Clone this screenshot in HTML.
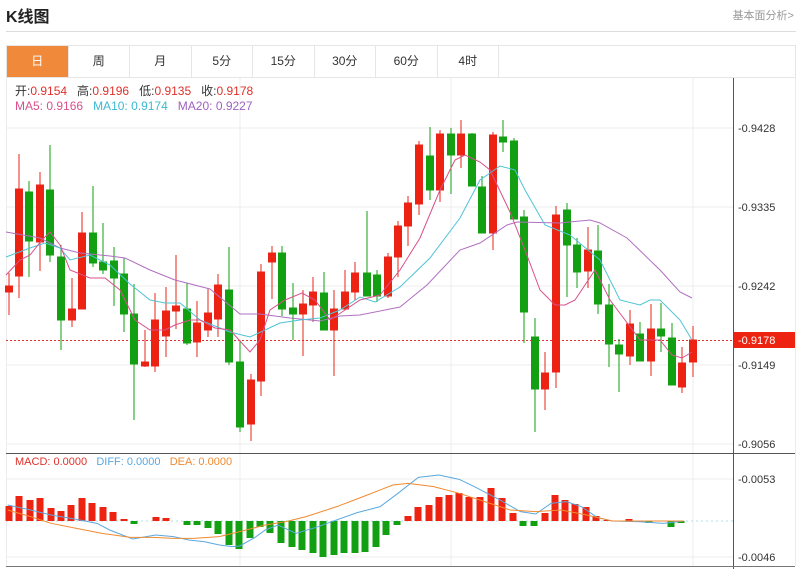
<!DOCTYPE html>
<html><head><meta charset="utf-8"><style>
*{margin:0;padding:0;box-sizing:border-box}
body{width:800px;height:569px;background:#fff;font-family:"Liberation Sans","Noto Sans CJK SC",sans-serif;position:relative;overflow:hidden}
.t{position:absolute;left:6px;top:3px;font-size:16px;font-weight:bold;color:#222}
.r{position:absolute;right:6px;top:7px;font-size:11px;color:#999}
.hl{position:absolute;left:6px;top:31px;width:790px;height:1px;background:#ddd}
.tabs{position:absolute;left:6px;top:45px;width:790px;height:33px;border:1px solid #e6e6e6;display:flex}
.tabs div{width:61.5px;border-right:1px solid #e6e6e6;text-align:center;line-height:31px;font-size:12px;color:#333}
.tabs div.a{background:#f0893a;color:#fff}
.i1{position:absolute;left:15px;top:82px;font-size:12px;color:#333}
.i1 b{font-weight:normal;color:#e0302a;margin-right:10px}
.i2{position:absolute;left:15px;top:99px;font-size:12px}
.m{position:absolute;left:15px;top:456px;font-size:11px}
</style></head><body>
<div class="t">K线图</div><div class="r">基本面分析&gt;</div><div class="hl"></div>
<div class="tabs"><div class="a">日</div><div>周</div><div>月</div><div>5分</div><div>15分</div><div>30分</div><div>60分</div><div>4时</div></div>
<svg width="800" height="569" style="position:absolute;left:0;top:0">
<g stroke="#ececec" stroke-width="1">
<line x1="6" y1="128" x2="733" y2="128"/><line x1="6" y1="207" x2="733" y2="207"/><line x1="6" y1="286" x2="733" y2="286"/><line x1="6" y1="365" x2="733" y2="365"/><line x1="6" y1="444" x2="733" y2="444"/>
<line x1="240" y1="78" x2="240" y2="566"/><line x1="451" y1="78" x2="451" y2="566"/><line x1="693" y1="78" x2="693" y2="566"/>
<line x1="6.5" y1="78" x2="6.5" y2="566"/><line x1="795.5" y1="78" x2="795.5" y2="566"/>
<line x1="6" y1="479" x2="733" y2="479"/><line x1="6" y1="557" x2="733" y2="557"/>
</g>
<line x1="733.5" y1="78" x2="733.5" y2="569" stroke="#555"/>
<line x1="6" y1="453.5" x2="795" y2="453.5" stroke="#555"/>
<line x1="6" y1="566.5" x2="795" y2="566.5" stroke="#777"/>
<g font-size="11" fill="#333"><text x="738" y="132">-0.9428</text><text x="738" y="211">-0.9335</text><text x="738" y="290">-0.9242</text><text x="738" y="369">-0.9149</text><text x="738" y="448">-0.9056</text><text x="738" y="483">-0.0053</text><text x="738" y="561">-0.0046</text></g>
<line x1="6" y1="340.5" x2="733" y2="340.5" stroke="#e03030" stroke-dasharray="2,2"/>
<rect x="734" y="332" width="61" height="16" fill="#ee2211"/><text x="738" y="344" font-size="11" fill="#fff">-0.9178</text>
<g stroke-width="1">
<g stroke="#e8241a" fill="#ee2211">
<line x1="9" y1="273" x2="9" y2="315"/><rect x="5.5" y="286" width="7" height="6"/>
<line x1="19" y1="154" x2="19" y2="298"/><rect x="15.5" y="189" width="7" height="87"/>
<line x1="40" y1="172" x2="40" y2="271"/><rect x="36.5" y="185" width="7" height="57"/>
<line x1="72" y1="278" x2="72" y2="327"/><rect x="68.5" y="309" width="7" height="11"/>
<line x1="82" y1="212" x2="82" y2="309"/><rect x="78.5" y="233" width="7" height="76"/>
<line x1="145" y1="330" x2="145" y2="367"/><rect x="141.5" y="362" width="7" height="4"/>
<line x1="155" y1="293" x2="155" y2="372"/><rect x="151.5" y="320" width="7" height="46"/>
<line x1="166" y1="287" x2="166" y2="357"/><rect x="162.5" y="311" width="7" height="25"/>
<line x1="176" y1="255" x2="176" y2="329"/><rect x="172.5" y="306" width="7" height="5"/>
<line x1="197" y1="301" x2="197" y2="357"/><rect x="193.5" y="323" width="7" height="19"/>
<line x1="208" y1="289" x2="208" y2="337"/><rect x="204.5" y="313" width="7" height="17"/>
<line x1="218" y1="274" x2="218" y2="337"/><rect x="214.5" y="285" width="7" height="34"/>
<line x1="251" y1="374" x2="251" y2="441"/><rect x="247.5" y="380" width="7" height="44"/>
<line x1="261" y1="264" x2="261" y2="396"/><rect x="257.5" y="272" width="7" height="109"/>
<line x1="272" y1="246" x2="272" y2="299"/><rect x="268.5" y="253" width="7" height="9"/>
<line x1="303" y1="290" x2="303" y2="356"/><rect x="299.5" y="304" width="7" height="10"/>
<line x1="313" y1="277" x2="313" y2="322"/><rect x="309.5" y="292" width="7" height="13"/>
<line x1="334" y1="290" x2="334" y2="376"/><rect x="330.5" y="309" width="7" height="21"/>
<line x1="345" y1="270" x2="345" y2="310"/><rect x="341.5" y="292" width="7" height="17"/>
<line x1="355" y1="262" x2="355" y2="300"/><rect x="351.5" y="273" width="7" height="19"/>
<line x1="388" y1="253" x2="388" y2="298"/><rect x="384.5" y="257" width="7" height="39"/>
<line x1="398" y1="221" x2="398" y2="277"/><rect x="394.5" y="226" width="7" height="31"/>
<line x1="408" y1="196" x2="408" y2="246"/><rect x="404.5" y="203" width="7" height="23"/>
<line x1="419" y1="141" x2="419" y2="215"/><rect x="415.5" y="145" width="7" height="59"/>
<line x1="440" y1="130" x2="440" y2="202"/><rect x="436.5" y="134" width="7" height="56"/>
<line x1="461" y1="120" x2="461" y2="168"/><rect x="457.5" y="134" width="7" height="21"/>
<line x1="493" y1="132" x2="493" y2="250"/><rect x="489.5" y="135" width="7" height="98"/>
<line x1="545" y1="352" x2="545" y2="410"/><rect x="541.5" y="373" width="7" height="16"/>
<line x1="556" y1="206" x2="556" y2="388"/><rect x="552.5" y="215" width="7" height="157"/>
<line x1="588" y1="227" x2="588" y2="288"/><rect x="584.5" y="250" width="7" height="21"/>
<line x1="630" y1="310" x2="630" y2="365"/><rect x="626.5" y="324" width="7" height="32"/>
<line x1="651" y1="304" x2="651" y2="376"/><rect x="647.5" y="329" width="7" height="32"/>
<line x1="682" y1="347" x2="682" y2="393"/><rect x="678.5" y="363" width="7" height="24"/>
<line x1="693" y1="326" x2="693" y2="377"/><rect x="689.5" y="340" width="7" height="22"/>
</g>
<g stroke="#12a012" fill="#12a012">
<line x1="29" y1="181" x2="29" y2="277"/><rect x="25.5" y="192" width="7" height="49"/>
<line x1="50" y1="145" x2="50" y2="262"/><rect x="46.5" y="190" width="7" height="65"/>
<line x1="61" y1="245" x2="61" y2="350"/><rect x="57.5" y="257" width="7" height="63"/>
<line x1="93" y1="186" x2="93" y2="267"/><rect x="89.5" y="233" width="7" height="30"/>
<line x1="103" y1="223" x2="103" y2="274"/><rect x="99.5" y="262" width="7" height="8"/>
<line x1="114" y1="247" x2="114" y2="306"/><rect x="110.5" y="261" width="7" height="17"/>
<line x1="124" y1="258" x2="124" y2="332"/><rect x="120.5" y="274" width="7" height="40"/>
<line x1="134" y1="284" x2="134" y2="420"/><rect x="130.5" y="314" width="7" height="50"/>
<line x1="187" y1="283" x2="187" y2="345"/><rect x="183.5" y="309" width="7" height="34"/>
<line x1="229" y1="247" x2="229" y2="365"/><rect x="225.5" y="290" width="7" height="72"/>
<line x1="240" y1="340" x2="240" y2="432"/><rect x="236.5" y="362" width="7" height="65"/>
<line x1="282" y1="246" x2="282" y2="316"/><rect x="278.5" y="253" width="7" height="56"/>
<line x1="293" y1="283" x2="293" y2="340"/><rect x="289.5" y="308" width="7" height="6"/>
<line x1="324" y1="272" x2="324" y2="330"/><rect x="320.5" y="293" width="7" height="37"/>
<line x1="367" y1="211" x2="367" y2="296"/><rect x="363.5" y="273" width="7" height="23"/>
<line x1="377" y1="270" x2="377" y2="302"/><rect x="373.5" y="275" width="7" height="21"/>
<line x1="430" y1="127" x2="430" y2="200"/><rect x="426.5" y="156" width="7" height="34"/>
<line x1="451" y1="128" x2="451" y2="194"/><rect x="447.5" y="134" width="7" height="21"/>
<line x1="472" y1="133" x2="472" y2="186"/><rect x="468.5" y="134" width="7" height="52"/>
<line x1="482" y1="176" x2="482" y2="233"/><rect x="478.5" y="187" width="7" height="46"/>
<line x1="503" y1="120" x2="503" y2="152"/><rect x="499.5" y="137" width="7" height="5"/>
<line x1="514" y1="138" x2="514" y2="219"/><rect x="510.5" y="141" width="7" height="78"/>
<line x1="524" y1="210" x2="524" y2="343"/><rect x="520.5" y="217" width="7" height="95"/>
<line x1="535" y1="318" x2="535" y2="432"/><rect x="531.5" y="337" width="7" height="52"/>
<line x1="567" y1="203" x2="567" y2="297"/><rect x="563.5" y="210" width="7" height="35"/>
<line x1="577" y1="238" x2="577" y2="288"/><rect x="573.5" y="245" width="7" height="27"/>
<line x1="598" y1="225" x2="598" y2="314"/><rect x="594.5" y="251" width="7" height="53"/>
<line x1="609" y1="284" x2="609" y2="367"/><rect x="605.5" y="305" width="7" height="39"/>
<line x1="619" y1="339" x2="619" y2="392"/><rect x="615.5" y="345" width="7" height="9"/>
<line x1="640" y1="322" x2="640" y2="361"/><rect x="636.5" y="334" width="7" height="27"/>
<line x1="661" y1="303" x2="661" y2="352"/><rect x="657.5" y="329" width="7" height="7"/>
<line x1="672" y1="323" x2="672" y2="385"/><rect x="668.5" y="338" width="7" height="47"/>
</g></g>
<g fill="none" stroke-width="1">
<polyline stroke="#b070c0" points="6,232 40,238 60,248 80,253 110,256 125,258 150,270 175,280 210,289 240,314 260,314 290,318 320,321 340,316 360,315 400,307 427,285 460,250 480,243 507,225 517,222 560,223 590,220 600,223 627,238 660,270 680,292 692,298"/>
<polyline stroke="#4ec3d6" points="6,257 30,248 45,243 60,248 70,260 90,255 110,265 130,284 150,300 165,303 180,303 200,320 230,332 250,337 265,330 280,323 300,320 320,318 340,310 360,297 375,302 400,287 430,258 460,218 480,180 500,166 515,170 525,190 545,225 570,235 600,260 620,300 640,305 650,300 660,300 680,320 692,340"/>
<polyline stroke="#d8508a" points="6,275 20,260 30,255 42,240 50,232 60,245 70,270 90,278 105,278 120,290 135,320 150,330 165,330 175,325 190,320 200,320 215,328 230,330 250,352 260,340 270,310 285,300 302,293 315,300 330,320 345,310 360,300 380,295 400,270 420,238 440,190 455,160 465,155 480,162 490,170 510,212 525,250 540,290 555,305 565,305 575,300 585,285 595,270 610,300 625,320 640,340 660,340 672,355 682,358 692,352"/>
</g>
<line x1="6" y1="521" x2="733" y2="521" stroke="#aee0e8" stroke-dasharray="2,3"/>
<g fill="#ee2211">
<rect x="5.5" y="506" width="7" height="15"/><rect x="15.5" y="496" width="7" height="25"/><rect x="26.5" y="500" width="7" height="21"/><rect x="36.5" y="498" width="7" height="23"/><rect x="47.5" y="508" width="7" height="13"/><rect x="57.5" y="511" width="7" height="10"/><rect x="67.5" y="505" width="7" height="16"/><rect x="78.5" y="498" width="7" height="23"/><rect x="88.5" y="503" width="7" height="18"/><rect x="99.5" y="507" width="7" height="14"/><rect x="109.5" y="512" width="7" height="9"/><rect x="120.5" y="519" width="7" height="2"/><rect x="152.5" y="517" width="7" height="4"/><rect x="162.5" y="518" width="7" height="3"/>
<rect x="404.5" y="516" width="7" height="5"/><rect x="414.5" y="507" width="7" height="14"/><rect x="425.5" y="505" width="7" height="16"/><rect x="435.5" y="497" width="7" height="24"/><rect x="445.5" y="495" width="7" height="26"/><rect x="455.5" y="493" width="7" height="28"/><rect x="465.5" y="497" width="7" height="24"/><rect x="476.5" y="497" width="7" height="24"/><rect x="487.5" y="488" width="7" height="33"/><rect x="498.5" y="498" width="7" height="23"/><rect x="509.5" y="513" width="7" height="8"/>
<rect x="541.5" y="513" width="7" height="8"/><rect x="551.5" y="495" width="7" height="26"/><rect x="561.5" y="500" width="7" height="21"/><rect x="571.5" y="504" width="7" height="17"/><rect x="582.5" y="507" width="7" height="14"/><rect x="592.5" y="516" width="7" height="5"/><rect x="603.5" y="520" width="7" height="1"/><rect x="625.5" y="519" width="7" height="2"/>
</g>
<g fill="#12a012">
<rect x="130.5" y="521" width="7" height="3"/><rect x="183.5" y="521" width="7" height="4"/><rect x="193.5" y="521" width="7" height="4"/><rect x="204.5" y="521" width="7" height="7"/><rect x="214.5" y="521" width="7" height="13"/><rect x="225.5" y="521" width="7" height="24"/><rect x="235.5" y="521" width="7" height="28"/><rect x="246.5" y="521" width="7" height="17"/><rect x="256.5" y="521" width="7" height="6"/><rect x="266.5" y="521" width="7" height="12"/><rect x="277.5" y="521" width="7" height="22"/><rect x="288.5" y="521" width="7" height="26"/><rect x="298.5" y="521" width="7" height="29"/><rect x="309.5" y="521" width="7" height="32"/><rect x="319.5" y="521" width="7" height="36"/><rect x="330.5" y="521" width="7" height="34"/><rect x="340.5" y="521" width="7" height="32"/><rect x="351.5" y="521" width="7" height="32"/><rect x="361.5" y="521" width="7" height="31"/><rect x="372.5" y="521" width="7" height="26"/><rect x="382.5" y="521" width="7" height="14"/><rect x="393.5" y="521" width="7" height="4"/>
<rect x="519.5" y="521" width="7" height="5"/><rect x="530.5" y="521" width="7" height="5"/><rect x="645.5" y="521" width="7" height="2"/><rect x="667.5" y="521" width="7" height="6"/><rect x="677.5" y="521" width="7" height="2"/>
</g>
<g transform="translate(0,440) scale(0.5102,0.3333)" fill="none">
<polyline vector-effect="non-scaling-stroke" stroke="#5aa8e0" points="15,195 60,210 100,225 150,238 190,250 215,270 260,297 305,285 340,290 370,300 400,305 430,315 455,320 470,318 500,292 520,270 545,255 580,280 620,262 650,245 700,218 745,200 780,160 820,112 860,105 900,118 930,140 980,180 1020,215 1050,222 1080,190 1110,185 1140,200 1170,232 1200,243 1250,245 1300,250 1340,243"/>
<polyline vector-effect="non-scaling-stroke" stroke="#f08a30" points="15,210 60,230 100,250 150,265 200,280 255,292 300,292 340,295 380,295 430,290 470,275 520,255 560,245 600,230 660,200 720,165 770,135 800,130 850,140 900,160 950,185 1000,210 1050,215 1100,210 1150,225 1200,243 1340,243"/>
</g>
</svg>
<div class="i1">开:<b>0.9154</b>高:<b>0.9196</b>低:<b>0.9135</b>收:<b>0.9178</b></div>
<div class="i2"><span style="color:#d8508a">MA5: 0.9166</span>&nbsp;&nbsp;&nbsp;<span style="color:#3bb8d0">MA10: 0.9174</span>&nbsp;&nbsp;&nbsp;<span style="color:#a060c0">MA20: 0.9227</span></div>
<div class="m"><span style="color:#e0302a">MACD: 0.0000</span>&nbsp;&nbsp;&nbsp;<span style="color:#5aa8e0">DIFF: 0.0000</span>&nbsp;&nbsp;&nbsp;<span style="color:#f08a30">DEA: 0.0000</span></div>
</body></html>
